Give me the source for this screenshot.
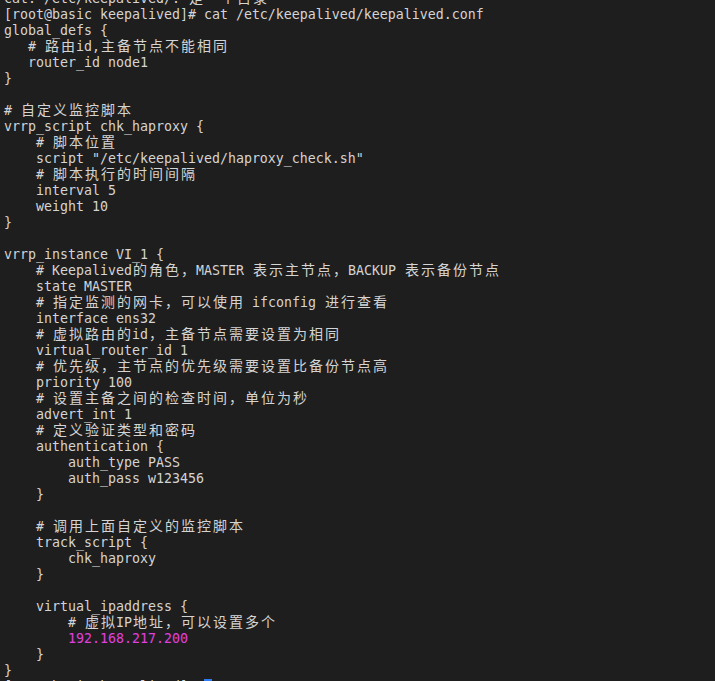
import React from "react";

const lines = [
  { text: "cat: /etc/keepalived/: 是一个目录" },
  { text: "[root@basic keepalived]# cat /etc/keepalived/keepalived.conf" },
  { text: "global_defs {" },
  { text: "   # 路由id,主备节点不能相同" },
  { text: "   router_id node1" },
  { text: "}" },
  { text: "" },
  { text: "# 自定义监控脚本" },
  { text: "vrrp_script chk_haproxy {" },
  { text: "    # 脚本位置" },
  { text: '    script "/etc/keepalived/haproxy_check.sh"' },
  { text: "    # 脚本执行的时间间隔" },
  { text: "    interval 5" },
  { text: "    weight 10" },
  { text: "}" },
  { text: "" },
  { text: "vrrp_instance VI_1 {" },
  { text: "    # Keepalived的角色，MASTER 表示主节点，BACKUP 表示备份节点" },
  { text: "    state MASTER" },
  { text: "    # 指定监测的网卡，可以使用 ifconfig 进行查看" },
  { text: "    interface ens32" },
  { text: "    # 虚拟路由的id，主备节点需要设置为相同" },
  { text: "    virtual_router_id 1" },
  { text: "    # 优先级，主节点的优先级需要设置比备份节点高" },
  { text: "    priority 100" },
  { text: "    # 设置主备之间的检查时间，单位为秒" },
  { text: "    advert_int 1" },
  { text: "    # 定义验证类型和密码" },
  { text: "    authentication {" },
  { text: "        auth_type PASS" },
  { text: "        auth_pass w123456" },
  { text: "    }" },
  { text: "" },
  { text: "    # 调用上面自定义的监控脚本" },
  { text: "    track_script {" },
  { text: "        chk_haproxy" },
  { text: "    }" },
  { text: "" },
  { text: "    virtual_ipaddress {" },
  { text: "        # 虚拟IP地址，可以设置多个" },
  { text: "        192.168.217.200", ip: true },
  { text: "    }" },
  { text: "}" },
  { text: "[root@basic keepalived]# ", cursor: true },
];

// wide chars take two terminal cells
const isWide = (ch) => ch.charCodeAt(0) > 0x2e7f;

const TermText = ({ text }) => {
  const parts = [];
  let buf = "";
  [...text].forEach((ch, i) => {
    if (isWide(ch)) {
      if (buf) {
        parts.push(<span key={"a" + i}>{buf}</span>);
        buf = "";
      }
      parts.push(
        <span
          key={"w" + i}
          className="inline-block w-[16px] text-center text-[14px] leading-[12px] font-['Noto_Sans_CJK_SC',sans-serif]"
        >
          {ch}
        </span>
      );
    } else {
      buf += ch;
    }
  });
  if (buf) parts.push(<span key="end">{buf}</span>);
  return parts;
};

const App = () => {
  return (
    <div className="h-[681px] w-full overflow-hidden bg-[#1e1e1e] text-[#d4d4d4] font-['DejaVu_Sans_Mono',monospace] text-[13.29px]">
      <div className="-mt-[9px] pl-[4px]">
        {lines.map((line, i) => (
          <div
            key={i}
            className={
              "h-[16px] leading-[16px] whitespace-pre " +
              (line.ip ? "text-[#e040e0]" : "")
            }
          >
            <TermText text={line.text} />
            {line.cursor && (
              <span className="inline-block w-[8px] h-[14px] align-top bg-[#2f7cf6]" />
            )}
          </div>
        ))}
      </div>
    </div>
  );
};

export default App;
